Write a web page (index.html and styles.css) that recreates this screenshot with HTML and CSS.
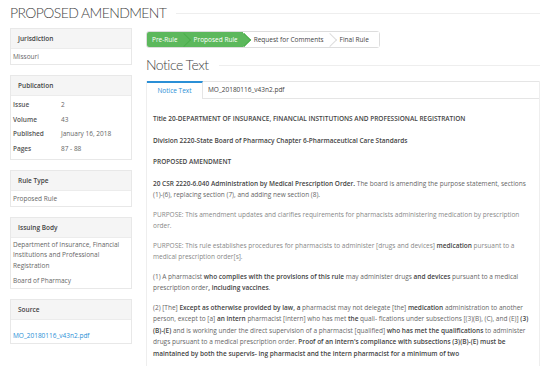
FILE: index.html
```html
<!DOCTYPE html>
<html lang="en">
  <head>
    <meta charset="UTF-8" />
    <meta name="viewport" content="width=device-width, initial-scale=1.0" />
    <title>Proposed Amendment</title>
    <link rel="stylesheet" href="styles.css">
  </head>
  <body>
    <div class="page-title">
      <h1>PROPOSED AMENDMENT</h1>
      <span class="rule"></span>
    </div>
    <div class="layout">
      <aside class="side">
        <section class="panel">
          <h3>Jurisdiction</h3>
          <div class="panel-body">Missouri</div>
        </section>
        <section class="panel">
          <h3>Publication</h3>
          <div class="panel-body">
            <dl class="pub">
              <dt>Issue</dt><dd>2</dd>
              <dt>Volume</dt><dd>43</dd>
              <dt>Published</dt><dd>January 16, 2018</dd>
              <dt>Pages</dt><dd>87 - 88</dd>
            </dl>
          </div>
        </section>
        <section class="panel">
          <h3>Rule Type</h3>
          <div class="panel-body">Proposed Rule</div>
        </section>
        <section class="panel">
          <h3>Issuing Body</h3>
          <div class="panel-body">
            <p>Department of Insurance, Financial Institutions and Professional Registration</p>
            <p>Board of Pharmacy</p>
          </div>
        </section>
        <section class="panel source">
          <h3>Source</h3>
          <div class="panel-body"><a href="javascript:;">MO_20180116_v43n2.pdf</a></div>
        </section>
      </aside>

      <main class="main">
        <div class="steps">
          <span class="step done">Pre-Rule</span>
          <span class="step done">Proposed Rule</span>
          <span class="step">Request for Comments</span>
          <span class="step">Final Rule</span>
        </div>

        <div class="section-title">
          <h2>Notice Text</h2>
          <span class="rule"></span>
        </div>

        <div class="tabs">
          <div class="tab-bar">
            <a class="tab active" href="javascript:;">Notice Text</a>
            <a class="tab" href="javascript:;">MO_20180116_v43n2.pdf</a>
          </div>
          <div class="tab-body">
            <p class="head">Title 20-DEPARTMENT OF INSURANCE, FINANCIAL INSTITUTIONS AND PROFESSIONAL REGISTRATION</p>
            <p class="head">Division 2220-State Board of Pharmacy Chapter 6-Pharmaceutical Care Standards</p>
            <p class="head">PROPOSED AMENDMENT</p>
            <p><b>20 CSR 2220-6.040 Administration by Medical Prescription Order.</b> The board is amending the purpose statement, sections (1)-(6), replacing section (7), and adding new section (8).</p>
            <p class="light">PURPOSE: This amendment updates and clarifies requirements for pharmacists administering medication by prescription order.</p>
            <p class="light">PURPOSE: This rule establishes procedures for pharmacists to administer [drugs and devices] <b>medication</b> pursuant to a medical prescription order[s].</p>
            <p>(1) A pharmacist <b>who complies with the provisions of this rule</b> may administer drugs <b>and devices</b> pursuant to a medical prescription order<b>, including vaccines</b>.</p>
            <p>(2) [The] <b>Except as otherwise provided by law, a</b> pharmacist may not delegate [the] <b>medication</b> administration to another person, except to [a] <b>an intern</b> pharmacist [intern] who has met <b>the</b> quali- fications under subsections [(3)(B), (C), and (E)] <b>(3)(B)-(E)</b> and is working under the direct supervision of a pharmacist [qualified] <b>who has met the qualifications</b> to administer drugs pursuant to a medical prescription order. <b>Proof of an intern's compliance with subsections (3)(B)-(E) must be maintained by both the supervis- ing pharmacist and the intern pharmacist for a minimum of two</b></p>
          </div>
        </div>
      </main>
    </div>
  </body>
</html>
```

FILE: styles.css
```css
* {
  margin: 0;
  padding: 0;
  box-sizing: border-box;
}
body {
  font-family: "Open Sans", "Liberation Sans", sans-serif;
  font-size: 6.5px;
  color: #666;
  background: #fff;
  padding: 3px 10px 0 10px;
}
a {
  text-decoration: none;
  color: #2a8fd6;
}
b {
  font-weight: 600;
  color: #444;
}

/* page title */
.page-title,
.section-title {
  display: flex;
  align-items: center;
  gap: 10px;
}
.page-title h1,
.section-title h2 {
  font-family: Lato, "Open Sans", sans-serif;
  font-weight: 300;
  color: #444;
  white-space: nowrap;
}
.page-title h1 {
  font-size: 14px;
  letter-spacing: -0.6px;
  line-height: 20px;
}
.section-title h2 {
  font-size: 14px;
  letter-spacing: -0.5px;
  line-height: 18px;
}
.rule {
  flex: 1;
  border-top: 1px solid #eee;
}

.layout {
  display: flex;
  gap: 14px;
  margin-top: 5px;
}

/* sidebar */
.side {
  width: 122px;
  flex-shrink: 0;
}
.panel {
  border: 1px solid #e8e8e8;
  margin-bottom: 10px;
  background: #fff;
}
.panel h3 {
  background: #f5f5f5;
  font-size: 6.5px;
  font-weight: 600;
  color: #444;
  height: 20px;
  line-height: 20px;
  padding: 0 7px;
  border-bottom: 1px solid #ececec;
}
.panel-body {
  padding: 2px 2px 2px 2px;
  line-height: 11px;
}
.panel-body p {
  line-height: 10.5px;
}
.panel-body p + p {
  margin-top: 4.5px;
}
.source .panel-body {
  padding-top: 10px;
}
.pub {
  display: grid;
  grid-template-columns: 48px 1fr;
  row-gap: 3.5px;
  padding: 1px 0 3px;
}
.pub dt {
  color: #555;
  font-weight: 600;
}

/* steps */
.main {
  flex: 1;
  min-width: 0;
}
.steps {
  display: inline-flex;
  border: 1px solid #ddd;
  border-radius: 3px;
  height: 17px;
  margin-top: 3px;
  margin-bottom: 8px;
}
.step {
  position: relative;
  line-height: 15px;
  padding: 0 5px 0 11px;
  color: #444;
  background: #fff;
}
.step:first-child {
  padding-left: 5px;
  border-radius: 2px 0 0 2px;
}
.step:last-child {
  padding-right: 10px;
}
.step.done {
  background: #5cb85c;
  color: #fff;
}
.step:not(:last-child)::after {
  content: "";
  position: absolute;
  right: -6px;
  top: 3px;
  width: 9px;
  height: 9px;
  transform: rotate(45deg);
  background: inherit;
  border-top: 1px solid #ddd;
  border-right: 1px solid #ddd;
  z-index: 1;
}
.step.done::after {
  border-color: #4cae4c;
}

/* tabs */
.tabs {
  margin-top: 7px;
  border: 1px solid #eee;
  border-top: 0;
}
.tab-bar {
  display: flex;
  border-bottom: 1px solid #e5e5e5;
}
.tab {
  color: #444;
  line-height: 16px;
  padding: 0 5px;
  border-top: 1px solid #e5e5e5;
  flex: 1;
}
.tab.active {
  flex: 0 0 56px;
  text-align: center;
  color: #2a8fd6;
  border-top: 2px solid #2a8fd6;
  border-right: 1px solid #e5e5e5;
  background: #fff;
  margin-bottom: -1px;
}
.tab-body {
  padding: 14px 10px 10px 6px;
  line-height: 11.5px;
}
.tab-body p {
  margin-bottom: 8px;
}
.tab-body .head {
  font-weight: 600;
  color: #444;
  margin-bottom: 10px;
}
.tab-body .light {
  color: #888;
}
```
